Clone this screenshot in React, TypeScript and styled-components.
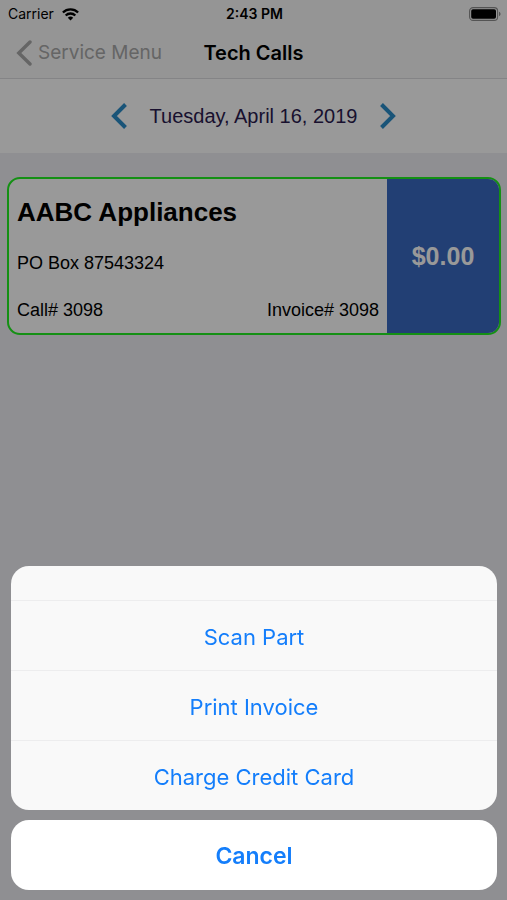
import React from "react";
import styled, { createGlobalStyle } from "styled-components";

const system = `Inter, "Liberation Sans", sans-serif`;
const helvetica = `"Liberation Sans", Arial, sans-serif`;

const GlobalStyle = createGlobalStyle`
  *, *::before, *::after { box-sizing: border-box; }
  body { margin: 0; background: #efeff4; font-family: ${system}; color: #000; }
  button { margin: 0; padding: 0; border: 0; background: none; font: inherit; color: inherit; cursor: pointer; }
  h1, h2, p { margin: 0; }
  svg { display: block; flex: none; }
`;

const Screen = styled.div`
  min-height: 100vh;
`;

const Header = styled.header`
  background: #f8f8f8;
  border-bottom: 1px solid #dcdcdf;
`;

const StatusBar = styled.div`
  display: grid;
  grid-template-columns: 1fr auto 1fr;
  align-items: center;
  height: 28px;
  padding: 0 6px 0 8px;
  font-size: 14px;
  line-height: 16px;
`;

const Carrier = styled.div`
  display: flex;
  align-items: center;
  gap: 8px;
`;

const Clock = styled.time`
  font-weight: 600;
`;

const BatterySlot = styled.div`
  display: flex;
  justify-content: flex-end;
`;

const NavBar = styled.nav`
  display: grid;
  grid-template-columns: 1fr auto 1fr;
  align-items: center;
  height: 50px;
  padding: 0 16px;
`;

const BackButton = styled.button`
  display: flex;
  align-items: center;
  justify-self: start;
  gap: 6px;
  font-size: 19px;
  line-height: 24px;
  color: #a8a8a8;
`;

const Title = styled.h1`
  font-size: 20px;
  line-height: 24px;
  font-weight: 600;
`;

const DateBar = styled.section`
  display: flex;
  align-items: center;
  justify-content: center;
  gap: 23px;
  height: 74px;
  background: #fff;
  font-family: ${helvetica};
  font-size: 20px;
  line-height: 24px;
  color: #2b1b4f;
`;

const ArrowButton = styled.button`
  color: #2b8cc9;
`;

const Calls = styled.main`
  padding: 24px 6px 24px 7px;
`;

const CallCard = styled.article`
  display: flex;
  min-height: 158px;
  border: 2px solid #22f022;
  border-radius: 13px;
  overflow: hidden;
  background: #fff;
  font-family: ${helvetica};
  font-size: 18px;
  line-height: 24px;
`;

const Details = styled.div`
  flex: 1;
  display: flex;
  flex-direction: column;
  justify-content: space-between;
  padding: 17px 8px 11px 8px;
`;

const Customer = styled.h2`
  font-size: 26px;
  line-height: 32px;
  font-weight: 700;
`;

const References = styled.div`
  display: flex;
  justify-content: space-between;
`;

const Amount = styled.div`
  display: flex;
  align-items: center;
  justify-content: center;
  width: 112px;
  background: #3a69c1;
  color: #fff;
  font-size: 25px;
  line-height: 28px;
  font-weight: 700;
`;

const Backdrop = styled.div`
  position: fixed;
  inset: 0;
  display: flex;
  flex-direction: column;
  justify-content: flex-end;
  gap: 10px;
  padding: 10px 10px 10px 11px;
  background: rgba(0, 0, 0, 0.4);
`;

const SheetGroup = styled.div<{ $solid?: boolean }>`
  border-radius: 18px;
  overflow: hidden;
  background: ${(p) => (p.$solid ? "#fff" : "#f9f9f9")};
`;

const SheetHeading = styled.div`
  height: 34px;
`;

const SheetButton = styled.button<{ $strong?: boolean }>`
  display: block;
  width: 100%;
  height: 70px;
  padding-top: 2px;
  border-top: ${(p) => (p.$strong ? "0" : "1px solid #ededee")};
  font-size: ${(p) => (p.$strong ? 23 : 22)}px;
  line-height: 28px;
  font-weight: ${(p) => (p.$strong ? 600 : 400)};
  color: #147efb;
`;

const Chevron = ({ right = false }: { right?: boolean }) => (
  <svg width="16" height="26" viewBox="0 0 16 26" fill="none" stroke="currentColor" strokeWidth="4" aria-hidden="true">
    <path d={right ? "M1.5 1.5 13 13 1.5 24.5" : "M14.5 1.5 3 13l11.5 11.5"} />
  </svg>
);

const BackChevron = () => (
  <svg width="16" height="26" viewBox="0 0 16 26" fill="none" stroke="currentColor" strokeWidth="3.4" strokeLinecap="round" aria-hidden="true">
    <path d="M14 2 2.8 13 14 24" />
  </svg>
);

const Wifi = () => (
  <svg width="17" height="13" viewBox="0 0 17 13" fill="none" stroke="#000" strokeWidth="2.3" aria-hidden="true">
    <path d="M.9 4.5a10.8 10.8 0 0 1 15.2 0" />
    <path d="M3.7 7.5a6.8 6.8 0 0 1 9.6 0" />
    <path d="M8.5 12.5 5.8 9.8a3.8 3.8 0 0 1 5.4 0z" fill="#000" stroke="none" />
  </svg>
);

const Battery = () => (
  <svg width="32" height="14" viewBox="0 0 32 14" aria-hidden="true">
    <rect x=".6" y=".6" width="28" height="12.8" rx="3.5" fill="none" stroke="#8c8c8c" strokeWidth="1.1" />
    <rect x="2.2" y="2.2" width="24.8" height="9.6" rx="1.8" />
    <path d="M30 4.8c2 .7 2 3.7 0 4.4z" fill="#8c8c8c" />
  </svg>
);

const actions = ["Scan Part", "Print Invoice", "Charge Credit Card"];

export default function App() {
  return (
    <>
      <GlobalStyle />
      <Screen>
        <Header>
          <StatusBar>
            <Carrier>
              Carrier
              <Wifi />
            </Carrier>
            <Clock>2:43 PM</Clock>
            <BatterySlot>
              <Battery />
            </BatterySlot>
          </StatusBar>
          <NavBar>
            <BackButton type="button">
              <BackChevron />
              Service Menu
            </BackButton>
            <Title>Tech Calls</Title>
          </NavBar>
        </Header>
        <DateBar>
          <ArrowButton type="button" aria-label="Previous day">
            <Chevron />
          </ArrowButton>
          <time dateTime="2019-04-16">Tuesday, April 16, 2019</time>
          <ArrowButton type="button" aria-label="Next day">
            <Chevron right />
          </ArrowButton>
        </DateBar>
        <Calls>
          <CallCard>
            <Details>
              <Customer>AABC Appliances</Customer>
              <p>PO Box 87543324</p>
              <References>
                <span>Call# 3098</span>
                <span>Invoice# 3098</span>
              </References>
            </Details>
            <Amount>$0.00</Amount>
          </CallCard>
        </Calls>
      </Screen>
      <Backdrop role="dialog" aria-modal="true" aria-label="Call actions">
        <SheetGroup>
          <SheetHeading />
          {actions.map((label) => (
            <SheetButton key={label} type="button">
              {label}
            </SheetButton>
          ))}
        </SheetGroup>
        <SheetGroup $solid>
          <SheetButton type="button" $strong>
            Cancel
          </SheetButton>
        </SheetGroup>
      </Backdrop>
    </>
  );
}
